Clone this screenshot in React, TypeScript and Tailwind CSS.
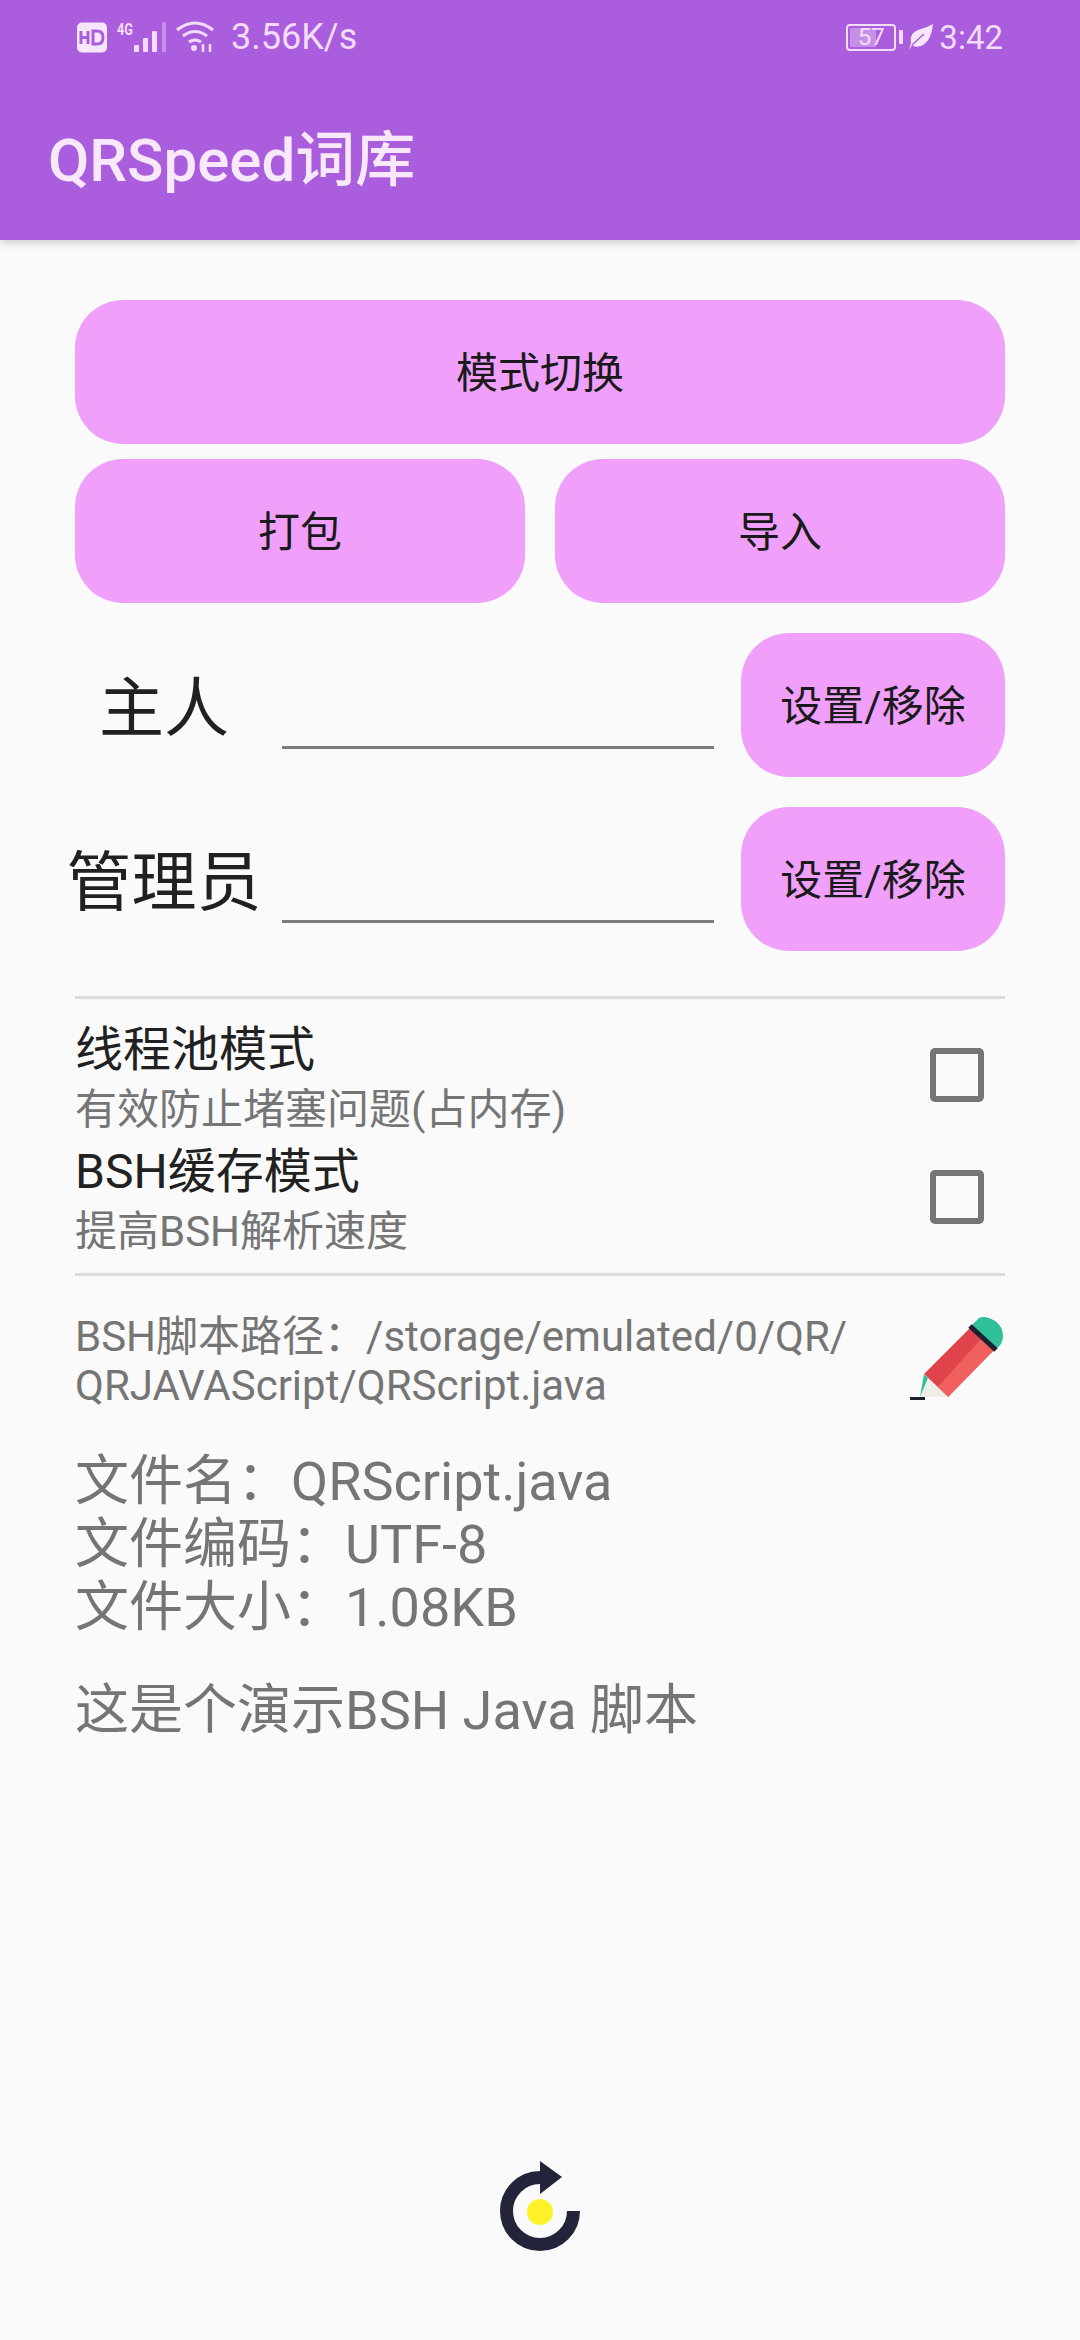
import React from 'react';

const FONT = "font-['Roboto','Noto_Sans_CJK_SC',sans-serif]";
const BTN = 'flex items-center justify-center bg-[#f0a0fb] rounded-[48px] h-[144px] pt-[2px] text-[#1a1a1a] text-[42px]';

function StatusBar() {
  return (
    <div className="h-[74px] flex items-center justify-between pl-[77px] pr-[77px] text-[#f3dcfb]">
      <div className="flex items-center">
        <svg width="30" height="31" viewBox="0 0 30 31">
          <rect width="30" height="30" y="0.5" rx="5" fill="#f6e6fb" />
          <path d="M4 9v13M11 9v13M4 15.5h7" stroke="#aa5edd" strokeWidth="3" fill="none" />
          <path d="M16 9v13h4q6 0 6-6.500t-6-6.500z" stroke="#aa5edd" strokeWidth="3" fill="none" />
        </svg>
        <svg width="52" height="34" viewBox="0 0 52 34" className="ml-[9px]" fill="#f3dcfb">
          <rect x="18" y="25" width="5" height="7" rx="1" />
          <rect x="27" y="18" width="5" height="14" rx="1" />
          <rect x="36" y="11" width="5" height="21" rx="1" />
          <rect x="46" y="2" width="4" height="30" rx="1" opacity="0.4" />
          <text x="1" y="15" fontSize="16" fontWeight="700" textLength="16" lengthAdjust="spacingAndGlyphs" fontFamily="Roboto, sans-serif">4G</text>
        </svg>
        <svg width="38" height="32" viewBox="0 0 38 32" className="ml-[8px]" fill="none" stroke="#f3dcfb" strokeWidth="3">
          <path d="M1 9q18-14 36 0" />
          <path d="M7 15q12-9 24 0" />
          <path d="M13 21q6-4 12 0" />
          <circle cx="18" cy="27" r="3" fill="#f3dcfb" stroke="none" />
          <path d="M27 31v-8M34 23v8" strokeWidth="2.500" />
        </svg>
        <span className="ml-[17px] text-[36px] leading-none">3.56K/s</span>
      </div>
      <div className="flex items-center">
        <div className="relative w-[50px] h-[27px] border-2 border-[#f3dcfb] rounded-[4px] flex items-center justify-center">
          <div className="absolute left-[2px] top-[2px] bottom-[2px] w-[26px] bg-[#f3dcfb]/40" />
          <span className="relative text-[24px] leading-none">57</span>
        </div>
        <div className="w-[4px] h-[14px] bg-[#f3dcfb] rounded-[1px] ml-[3px]" />
        <svg width="24" height="26" viewBox="0 0 24 26" className="ml-[6px]">
          <path d="M24 0Q22 18 12 22 6 24 3 21L0 26 2 19Q0 8 12 5 19 3 24 0z" fill="#f6e6fb" />
          <path d="M3 21 15 10" stroke="#aa5edd" strokeWidth="1.500" />
        </svg>
        <span className="ml-[6px] text-[33px] leading-none">3:42</span>
      </div>
    </div>
  );
}

function Option({ title, desc }: { title: string; desc: string }) {
  return (
    <div className="flex items-center justify-between h-[122px]">
      <div className="mt-[10px]">
        <p className="text-[48px] leading-[60px] text-[#212121]">{title}</p>
        <p className="text-[42px] leading-[60px] text-[#757575]">{desc}</p>
      </div>
      <div className="mr-[21px] w-[54px] h-[54px] border-[6px] border-[#757575] rounded-[5px]" />
    </div>
  );
}

function FormRow({ label, className }: { label: string; className: string }) {
  return (
    <div className={`flex ${className}`}>
      <div className="w-[178px] shrink-0 flex justify-center items-center pt-[8px] text-[65px] text-[#212121] whitespace-nowrap leading-none">{label}</div>
      <input className="ml-[29px] w-[432px] h-[60px] self-end mb-[28px] border-b-[3px] border-[#7d7d7d] outline-none bg-transparent" />
      <button className={`${BTN} ml-[27px] w-[264px]`}>设置/移除</button>
    </div>
  );
}

export default function App() {
  return (
    <div className={`${FONT} w-[1080px] h-[2340px] bg-[#fafafa] overflow-hidden flex flex-col`}>
      <div className="h-[240px] bg-[#aa5edd] shadow-[0_3px_8px_rgba(0,0,0,0.18)]">
        <StatusBar />
        <div className="pl-[48px] mt-[47px] text-[60px] leading-[80px] font-medium text-[#f8e8fc]">QRSpeed词库</div>
      </div>

      <div className="px-[75px] flex-1 flex flex-col">
        <button className={`${BTN} mt-[60px]`}>模式切换</button>
        <div className="flex gap-[30px] mt-[15px]">
          <button className={`${BTN} flex-1`}>打包</button>
          <button className={`${BTN} flex-1`}>导入</button>
        </div>
        <FormRow label="主人" className="mt-[30px]" />
        <FormRow label="管理员" className="mt-[30px]" />

        <div className="h-[3px] bg-[#dcdcdc] mt-[45px]" />
        <div className="mt-[15px]">
          <Option title="线程池模式" desc="有效防止堵塞问题(占内存)" />
          <Option title="BSH缓存模式" desc="提高BSH解析速度" />
        </div>
        <div className="h-[3px] bg-[#dcdcdc] mt-[15px]" />

        <div className="flex justify-between mt-[36px]">
          <p className="text-[42px] leading-[49px] text-[#757575] whitespace-nowrap">
            BSH脚本路径：/storage/emulated/0/QR/
            <br />
            QRJAVAScript/QRScript.java
          </p>
          <svg width="97" height="84" viewBox="28 26 97 84" className="shrink-0 mt-[4px]">
            <path d="M90 37 L99 28 Q104 26 109 28 Q123 33 123 47 Q123 54 115 60 Z" fill="#2fc09a" />
            <path d="M44 84 L92 36 L114 60 L68 107 Z" fill="#e0444a" />
            <path d="M81 71 L103 47 L114 60 L68 107 L58 97 Z" fill="#f0605f" />
            <path d="M90 36 L116 60" stroke="#1c2030" strokeWidth="5" />
            <path d="M44 84 L68 107 L40 107 Z" fill="#efeee6" />
            <path d="M44 84 L48 88 L40 107 Z" fill="#2fc09a" />
            <rect x="30" y="107" width="15" height="3" fill="#1c2030" />
          </svg>
        </div>

        <div className="mt-[40px] text-[54px] leading-[63px] text-[#757575]">
          <p>文件名：QRScript.java</p>
          <p>文件编码：UTF-8</p>
          <p>文件大小：1.08KB</p>
        </div>
        <p className="mt-[40px] text-[54px] leading-[63px] text-[#757575]">这是个演示BSH Java 脚本</p>

        <div className="mt-auto mb-[96px] flex justify-center">
          <svg width="80" height="83" viewBox="30 20 80 83" className="overflow-visible">
            <path d="M103.500 70 A33.500 33.500 0 1 1 70 36.500" fill="none" stroke="#23233a" strokeWidth="13" />
            <path d="M70 20 L92 36 L70 53 Z" fill="#23233a" />
            <circle cx="70" cy="71" r="13" fill="#fff22a" />
          </svg>
        </div>
      </div>
    </div>
  );
}
